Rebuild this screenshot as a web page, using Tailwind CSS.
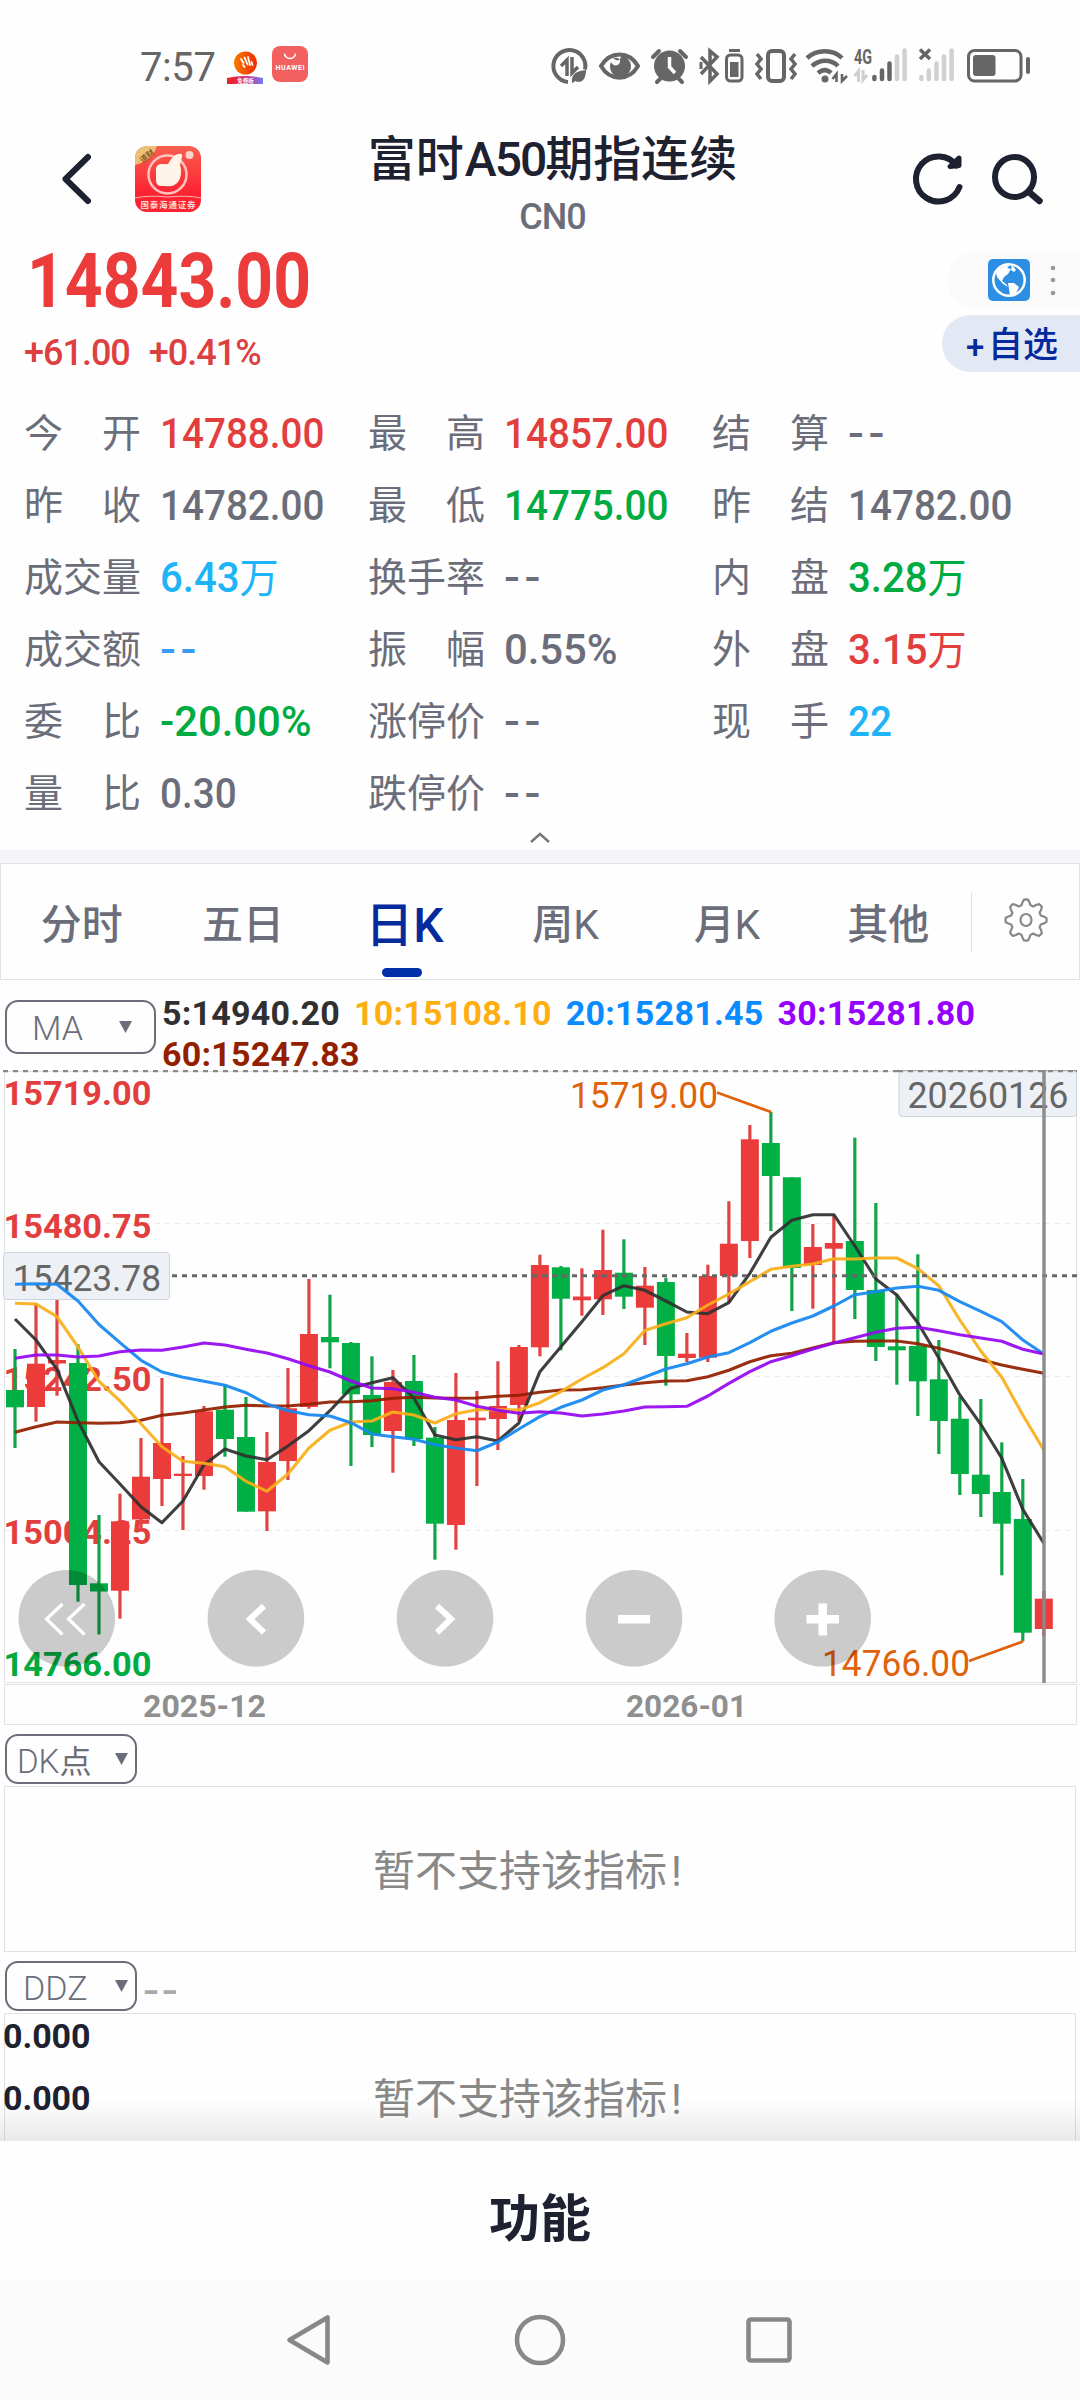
<!DOCTYPE html>
<html lang="zh-CN">
<head>
<meta charset="utf-8">
<title>富时A50期指连续</title>
<script src="https://cdn.jsdelivr.net/npm/@tailwindcss/browser@4"></script>
</head>
<body class="w-[1080px] h-[2400px] overflow-hidden bg-[#fefefe] flex flex-col font-['Roboto','Noto_Sans_CJK_SC',sans-serif] text-[#6b6e7a]">

<!-- status bar -->
<header class="h-[132px] shrink-0 flex items-center justify-between pl-[140px] pr-[49px]">
  <div class="flex items-center">
    <span class="w-[87px] pt-[3px] text-[40px] leading-none text-[#666] tracking-[-.4px]">7:57</span>
    <svg width="36" height="36" viewBox="0 0 36 36"><defs><linearGradient id="o" x1="0" x2="1"><stop offset="0" stop-color="#f77a00"/><stop offset="1" stop-color="#f02a00"/></linearGradient><linearGradient id="p" x1="0" x2="1"><stop offset="0" stop-color="#f0201c"/><stop offset=".5" stop-color="#d4307c"/><stop offset="1" stop-color="#6d7cf5"/></linearGradient></defs><circle cx="18.500" cy="15" r="11.500" fill="url(#o)"/><path d="M14 11l2.500 4M17.500 9.500l3 7M16 17l1.500 2M21 9l2 8M24.500 14l1 3" stroke="#fff" stroke-width="1.800" stroke-linecap="round"/><path d="M0 30Q18 26 36 30v6H0z" fill="url(#p)"/><text x="18.500" y="34.500" font-size="5.500" font-weight="700" text-anchor="middle" fill="#fff">免费听</text></svg>
    <svg class="ml-[9px] -mt-1" width="36" height="36" viewBox="0 0 36 36"><rect width="36" height="36" rx="8" fill="#f2605f"/><path d="M12.500 7.500a5.500 5 0 0 0 11 0" fill="none" stroke="#fff" stroke-width="1.500"/><text x="18" y="24" font-size="7" font-weight="700" text-anchor="middle" fill="#fff" textLength="29">HUAWEI</text></svg>
  </div>
  <svg class="overflow-visible" width="480" height="36" viewBox="551 48 480 36" fill="none" stroke="#666" stroke-width="4">
    <path d="M585 69.500A16 16 0 1 0 568 82"/><path d="M567 76V60l-6 6M572 57v16l6-6" stroke-width="3.500"/><path d="M572 83c-1-9 4-12 14-13 0 9-4 14-11 11l7-7-8 8z" fill="#666" stroke="none"/>
    <path d="M601 66c9-15.500 28-15.500 37 0-9 15.500-28 15.500-37 0z" stroke-width="4"/><path d="M613 58c5 5 8 1 8-2a10.500 10.500 0 1 1-10 6c2 5 8 4 9 0s-4-5-7-4z" fill="#666" stroke="none"/>
    <circle cx="669.500" cy="66" r="15.500" fill="#666" stroke="none"/><path d="M653 57l6-6M686 57l-6-6M657 82l4-4M682 82l-4-4" stroke-linecap="round"/><path d="M669.500 57v10l5.500 6" stroke="#fff" stroke-width="3.500"/>
    <path d="M701 57l16 17-7 7V51l7 6-16 17" stroke-width="3.500"/><path d="M701 62v7" stroke-width="3"/>
    <rect x="726.500" y="55" width="15.500" height="26" rx="4" stroke-width="3"/><rect x="730" y="62" width="8.500" height="15" fill="#666" stroke="none"/><path d="M729 50.500h11" stroke-width="3"/>
    <rect x="768" y="51" width="16" height="30" rx="4"/><path d="M757 54l4 5-4 5 4 5-4 5 4 5M795 54l-4 5 4 5-4 5 4 5-4 5" stroke-width="3.500"/>
    <path d="M807 58c10-9 26-9 35 0M812 66c8-7 19-7 26 0M818 73c5-4 9-4 13 0" stroke-width="4.500"/><circle cx="825" cy="79" r="3.500" fill="#666" stroke="none"/><path d="M836.500 82V74l-4 5M842 74v7l5-5" stroke-width="2.600"/>
    <text x="854" y="63.500" font-size="20" font-weight="700" fill="#666" stroke="none" textLength="18" lengthAdjust="spacingAndGlyphs">4G</text>
    <path d="M858.500 82V71l-4 5M863 70v10l4-5" stroke="#d0d0d0" stroke-width="3"/>
    <g stroke-linecap="round" stroke-width="4.500"><path d="M874.400 77v2M882 70.500V79M889.500 63.500V79"/><path d="M897 56.500V79M904.600 50.500V79M921.400 77v2M928.800 70.500V79M936.500 63.500V79M944 56.500V79M951.600 50.500V79" stroke="#d0d0d0"/></g>
    <path d="M920 49.500l10 9.500M930 49.500l-10 9.500" stroke-width="3.500"/>
    <rect x="968.500" y="50.500" width="52.500" height="30.500" rx="6" stroke-width="3"/><rect x="973" y="55" width="22.500" height="21" rx="3" fill="#666" stroke="none"/><path d="M1028 59v13" stroke-linecap="round"/>
  </svg>
</header>

<!-- title bar -->
<div class="h-[104px] shrink-0 grid grid-cols-[330px_1fr_330px]">
  <div class="flex pl-[60px] pt-[14px]">
    <svg width="34" height="66" viewBox="0 0 34 66"><path d="M28 11L5.500 33 28 55" fill="none" stroke="#1e2130" stroke-width="6" stroke-linecap="round" stroke-linejoin="round"/></svg>
    <svg class="ml-[41px]" width="66" height="66" viewBox="0 0 66 66"><defs><clipPath id="r"><rect width="66" height="66" rx="12"/></clipPath><linearGradient id="g" x2="0" y2="1"><stop stop-color="#f8604e"/><stop offset=".7" stop-color="#fc2433"/></linearGradient></defs><g clip-path="url(#r)"><rect width="66" height="66" fill="url(#g)"/><path d="M0 0h22Q17 15 0 19z" fill="#edc07a"/><text x="5" y="16" font-size="8" font-weight="700" fill="#8a5a20" transform="rotate(-38 8 13)">道财</text><circle cx="32.500" cy="28.500" r="19" fill="none" stroke="#ffc2bd" stroke-width="2.500"/><path d="M21 22q1-4 6-4h6q5-9 10-10 5-1 4 3l-2 8q1 2 1 7 0 8-5 12-4 3-10 2H25q-4-1-4-5z" fill="#fdf3e6"/><circle cx="54.500" cy="9" r="4" fill="#fdd4cb"/><path d="M0 52q14-3 33-1 20-2 33 1" fill="none" stroke="#ffb3ae"/><text x="33" y="61.500" font-size="8.500" font-weight="700" text-anchor="middle" fill="#ffd9d6" textLength="55">国泰海通证券</text></g></svg>
  </div>
  <div class="flex flex-col items-center justify-center pl-[25px]">
    <div class="h-[54px] flex items-center text-[#1e2130] font-medium text-[48px] leading-none -mt-1 whitespace-nowrap"><span>富时</span><span class="tracking-[-2px] ml-[1px]">A50</span><span>期指连续</span></div>
    <div class="h-[54px] mb-[-10px] flex items-center text-[36px] font-medium leading-none tracking-[-1px] pt-[5px]">CN0</div>
  </div>
  <div class="flex items-start pl-[160px] pt-[18px]">
    <svg width="140" height="60" viewBox="910 150 140 60" fill="none" stroke="#1e2130" stroke-width="6" stroke-linecap="round" stroke-linejoin="round"><path d="M959.500 187a22.500 22.500 0 1 1-3-21.500"/><path d="M950 166.500l9-1V158z" stroke-width="5" fill="#1e2130"/><ellipse cx="1014.500" cy="177" rx="19.500" ry="20"/><path d="M1029 192l10.500 9" stroke-width="6.500"/></svg>
  </div>
</div>

<!-- price -->
<section class="h-[161px] shrink-0 flex justify-between">
  <div class="pl-6 pt-[6px]">
    <div class="pl-[3px]"><span class="block origin-left scale-x-[0.868] text-[76px] leading-[78px] font-bold text-[#ec3b3b]">14843.00</span></div>
    <div class="flex h-[66px] items-center gap-[19px] text-[36px] leading-none text-[#dd4040] font-medium tracking-[-1px]"><span>+61.00</span><span>+0.41%</span></div>
  </div>
  <div class="pt-4 flex flex-col items-end gap-[7px]">
    <div class="w-[133px] h-[56px] rounded-l-full bg-[#fafafa] flex items-center pl-[41px] gap-[20px]">
      <svg width="42" height="42" viewBox="0 0 42 42"><rect width="42" height="42" rx="5" fill="#2d8fe3"/><circle cx="21" cy="21" r="15.700" fill="none" stroke="#fff" stroke-width="2.500"/><path d="M8 14q5-8 14-8l-3 3 4 1-3 5-4 3-2 4 4 3 2 3-5-3-6-7zM20 24l6 0 5 4-3 6-6 3-1-7zM24 6l4 5-2 2-3-2z" fill="#fff"/></svg>
      <svg width="6" height="34" viewBox="0 0 6 34" fill="#999"><circle cx="3" cy="5" r="2.300"/><circle cx="3" cy="17" r="2.300"/><circle cx="3" cy="30" r="2.300"/></svg>
    </div>
    <div class="w-[138px] h-[57px] rounded-l-full bg-[#e3e8f5] flex items-center pl-[24px] pt-[3px] text-[#052a9e] leading-none font-medium"><span class="text-[33px] w-[22px] mt-1">+</span><span class="text-[35px]">自选</span></div>
  </div>
</section>

<!-- quote table -->
<section id="quote" class="h-[432px] shrink-0 grid grid-cols-[344px_344px_344px] grid-rows-6 pl-6"></section>
<div class="h-[21px] shrink-0 flex justify-center"><svg width="22" height="16" viewBox="0 0 22 16"><path d="M2 13l9-8 9 8" fill="none" stroke="#777" stroke-width="2.500"/></svg></div>
<div class="h-[13px] shrink-0 bg-[#f4f5f9]"></div>

<!-- period tabs -->
<nav class="h-[117px] shrink-0 border border-[#e2e2e2] flex items-center text-[41px] leading-none font-[450]">
  <div class="w-[970px] h-full grid grid-cols-6 items-center text-center pt-[8px] pr-[2px]">
    <div>分时</div><div>五日</div>
    <div class="relative h-full flex items-center justify-center text-[48px] font-medium text-[#052a9e]">日K<i class="absolute bottom-[2px] left-[58px] w-[40px] h-[9px] rounded-full bg-[#002fa7]"></i></div>
    <div>周K</div><div>月K</div><div>其他</div>
  </div>
  <div class="w-px h-[60px] bg-[#e0e0e0]"></div>
  <svg class="ml-[32px] -mt-[3px]" width="44" height="44" viewBox="-22 -22 44 44" fill="none" stroke="#888" stroke-width="2.200" stroke-linejoin="round"><path id="gear"/><ellipse rx="5.500" ry="6"/></svg>
</nav>

<!-- MA legend -->
<div class="h-[90px] shrink-0 flex pl-[5px]">
  <div class="mt-[20px] w-[151px] h-[54px] rounded-[13px] border-2 border-[#6b6e7a] flex items-center justify-between pl-[25px] pr-[22px]"><span class="text-[34px] leading-none font-[350] pt-[2px]">MA</span><svg width="13" height="12"><path d="M0 0h13L6.500 12z" fill="#6b6e7a"/></svg></div>
  <div class="ml-[6px] mt-[13px] w-[850px] flex flex-wrap content-start gap-x-[14px] text-[34px] leading-[41px] font-bold tracking-[.25px]">
    <span class="text-[#303030]">5:14940.20</span><span class="text-[#ffae0f]">10:15108.10</span><span class="text-[#0a8bff]">20:15281.45</span><span class="text-[#9600ff]">30:15281.80</span><span class="text-[#931f00]">60:15247.83</span>
  </div>
</div>

<!-- candlestick chart -->
<svg id="chart" class="shrink-0 block" width="1080" height="657" viewBox="0 1070 1080 657"></svg>

<!-- indicators -->
<div class="h-[59px] shrink-0 flex pl-[5px] pt-[7px]">
  <div class="w-[132px] h-[50px] rounded-[13px] border-2 border-[#6b6e7a] flex items-center justify-between pl-[10px] pr-[7px]"><span class="text-[33px] leading-none font-[350] pt-[4px]">DK<span class="text-[32px] font-normal">点</span></span><svg width="13" height="12"><path d="M0 0h13L6.500 12z" fill="#6b6e7a"/></svg></div>
</div>
<div class="h-[166px] shrink-0 mx-1 border border-[#e2e2e2] flex text-[42px] leading-none text-[#888] pl-[368px] pt-[64px]"><span>暂不支持该指标</span><span class="pl-[4px]">!</span></div>
<div class="h-[61px] shrink-0 flex pl-[5px] pt-[9px]">
  <div class="w-[132px] h-[50px] rounded-[13px] border-2 border-[#6b6e7a] flex items-center justify-between pl-[16px] pr-[7px]"><span class="text-[34px] leading-none font-[350] pt-[4px]">DDZ</span><svg width="13" height="12"><path d="M0 0h13L6.500 12z" fill="#6b6e7a"/></svg></div>
  <span class="ml-[6px] mt-[11px] origin-left scale-x-[1.25] text-[38px] leading-none font-medium text-[#aaa] tracking-[2px]">--</span>
</div>
<div class="relative h-[128px] shrink-0">
  <div class="h-full mx-1 border border-b-0 border-[#e2e2e2] flex">
    <div class="w-[368px] flex flex-col pt-[1px] text-[34px] leading-[62px] font-bold text-[#1e2130] tracking-[-.1px]"><span class="-mt-[10px] -ml-[2px]">0.000</span><span class="-ml-[2px]">0.000</span></div>
    <div class="pt-[65px] text-[42px] leading-none text-[#888] flex"><span>暂不支持该指标</span><span class="pl-[4px]">!</span></div>
  </div>
  <div class="absolute inset-x-0 bottom-0 h-[42px] bg-linear-to-b from-black/0 to-black/8"></div>
</div>

<div class="h-[139px] shrink-0 flex items-center justify-center bg-[#fefefe] text-[51px] leading-none font-bold text-[#1e2130] pt-[17px]">功能</div>

<!-- system navigation -->
<footer class="h-[120px] shrink-0 bg-[#fbfbfb] flex justify-center items-center">
  <svg width="520" height="60" viewBox="280 2310 520 60" fill="none" stroke="#888" stroke-width="4.600" stroke-linejoin="round"><path d="M327.500 2317.500v45L289.500 2340z"/><circle cx="540" cy="2340" r="23"/><rect x="748.500" y="2319.500" width="41" height="41" rx="2.500"/></svg>
</footer>

<script>
// label, value, colour; three cells per row
const R='text-[#e33e3e]',G='text-[#00ab42]',B='text-[#1fb4f7]',N='text-[#6b6e7a]';
const rows=[
 ['今开','14788.00',R],['最高','14857.00',R],['结算','--',N],
 ['昨收','14782.00',N],['最低','14775.00',G],['昨结','14782.00',N],
 ['成交量','6.43万',B],['换手率','--',N],['内盘','3.28万',G],
 ['成交额','--','text-[#3a9bf5]'],['振幅','0.55%',N],['外盘','3.15万',R],
 ['委比','-20.00%',G],['涨停价','--',N],['现手','22',B],
 ['量比','0.30',N],['跌停价','--',N]];
// horizontal fit of a value, by its kind
const fit=v=>v==='--'?'scale-x-[1.12] tracking-[4px]':v.includes('%')?'scale-x-[0.995]':v.includes('万')?'scale-x-[0.955]':'scale-x-[0.92]';
document.getElementById('quote').innerHTML=rows.map(([l,v,c])=>
 `<div class="flex items-center leading-none"><span class="w-[117px] flex justify-between text-[39px] pt-[2px]">${[...l].map(x=>`<span>${x}</span>`).join('')}</span><span class="ml-[19px] flex items-center origin-left text-[42px] font-[480] pt-[2px] ${c} ${fit(v)}">${v.replace('万','')}${v.includes('万')?'<span class="text-[41px] font-normal pt-[2px]">万</span>':''}</span></div>`).join('');

// gear outline: eight rounded teeth
let g='';for(let i=0;i<64;i++){const a=i/64*2*Math.PI-Math.PI/2,r=18+2.600*Math.tanh(3*Math.cos(8*a));g+=(i?'L':'M')+(r*Math.cos(a)).toFixed(1)+' '+(r*Math.sin(a)).toFixed(1)}
document.getElementById('gear').setAttribute('d',g+'z');

// candles: colour, high, open/close top, open/close bottom, low
const K=[['g',1349,1390,1407.3,1448],['r',1303,1363.7,1407,1421.7],['r',1299,1360,1363.5,1395.7],['g',1344.3,1363,1585,1601.7],['g',1515,1583.3,1591.5,1634.5],['r',1493.7,1521.3,1590.7,1618.7],['r',1438,1476.7,1519.5,1529],['r',1378,1443,1479,1506],['r',1456,1473.7,1476,1530],['r',1406,1411.3,1476,1489.7],['g',1385.7,1409.7,1439,1456.7],['g',1397,1437,1511.7,1511.7],['r',1432,1462,1511.3,1531],['r',1368,1408.3,1461,1480],['r',1279,1334,1407,1408.7],['g',1294.7,1337,1342.3,1368.3],['g',1342,1343,1394.3,1466],['g',1356.3,1395,1435,1447],['r',1370,1382,1431,1472.7],['g',1355,1381,1439,1446],['g',1427,1437.7,1523.7,1559.7],['r',1373,1420,1525,1549.7],['r',1391,1417.7,1420.3,1486],['r',1361.3,1406,1419,1450],['r',1345,1347,1405,1421],['r',1254.7,1265,1347.3,1356.3],['g',1266,1267.3,1298.7,1350.3],['r',1268.3,1296.5,1300.3,1315.7],['r',1229.7,1270,1299.3,1315],['g',1239.3,1272.7,1296.7,1309],['r',1267,1285.7,1307.7,1345],['g',1277.7,1282,1356,1385.7],['r',1333,1353.7,1358,1362],['r',1264.7,1276,1357.7,1362],['r',1201.3,1243.7,1276,1302.7],['r',1125,1139.3,1241,1258],['g',1112,1143,1176,1231],['g',1177.3,1177.3,1268,1311],['r',1224,1247,1265,1308.7],['r',1215,1243,1248.7,1342.7],['g',1137.7,1241,1290,1319],['g',1203,1290,1347,1361],['g',1294,1346.3,1350.3,1384.7],['g',1254.3,1346,1381.3,1416],['g',1340,1379.3,1421,1454],['g',1397,1418.7,1474,1495],['g',1399,1474.7,1494,1517],['g',1442.3,1492,1523.7,1575.3],['g',1479,1519,1632.7,1641.3],['r',1591,1598.7,1629,1636]];
// moving averages: 60, 5, 10, 20, 30
const L=[
['#931f00',[1432.3,1426.7,1422,1422.7,1423.3,1422.7,1420.3,1415.3,1413,1410,1407,1405.3,1406,1406,1404.3,1402,1401.7,1400.7,1398.3,1397.3,1398,1398.3,1398,1396.3,1395.3,1392.3,1390,1389.7,1387.7,1385,1382.7,1381,1380.7,1376.7,1370.3,1361.7,1355.7,1353.3,1348,1342.7,1341.3,1341,1341,1343.7,1348.3,1353.7,1359.7,1365,1369.3,1373.3]],
['#303030',[1319,1340,1369.3,1421,1461.7,1484,1506.7,1522.7,1501,1464.7,1449,1456,1459.7,1446,1430.7,1410.7,1388.3,1382.7,1377.7,1398,1435,1439.7,1436.7,1441,1423,1371.7,1346.7,1321.7,1295.7,1285.7,1290.3,1301,1312,1313.7,1302.7,1273.3,1237.3,1220.3,1214.7,1214.7,1246,1279,1295,1322.7,1358,1395,1424.3,1458.3,1509.3,1543.3]],
['#faae1a',[1303.3,1304,1316.7,1347,1381.3,1401,1423.7,1446.7,1461.3,1463.3,1466.7,1481.3,1491.3,1474,1448,1430.3,1422,1421,1412,1415,1423,1413.7,1409.7,1409.7,1410,1402.7,1391.7,1379,1367.7,1353.7,1330.5,1323.7,1317.7,1305,1294,1281.7,1269.3,1266.3,1264,1258.7,1259,1258,1258,1268.7,1285.7,1320,1351,1377.3,1415,1450]],
['#1488f0',[1284.3,1283.7,1284.3,1301,1324.5,1342.7,1360.3,1372,1377.3,1381.3,1385.3,1392.7,1404,1410.7,1414.7,1416,1422.7,1434,1436.7,1439.3,1444.7,1448,1450.7,1442,1429,1416.7,1407.3,1400,1390,1384.7,1377,1369,1363.7,1357,1352.7,1342.7,1331.3,1323,1316,1306,1294.7,1291.7,1288,1286.3,1290.3,1301.7,1311.3,1321.7,1340,1354]],
['#9508f0',[1358.3,1355,1355,1357,1356,1351.7,1350,1350.3,1347,1343,1345,1349.3,1353,1358.7,1365.7,1372,1381,1388,1388.7,1392.3,1397.3,1400,1406.3,1410.3,1413.3,1411.7,1413,1416,1414,1411,1407,1406.7,1406.3,1396,1383.3,1371.7,1361.7,1355.7,1349,1343,1337.7,1332.3,1328.3,1327.3,1330.7,1334.7,1338,1341.3,1349.3,1354]]];
const X=i=>15+i*20.996;
const T=(x,y,t,w,fs,c,b)=>`<text x="${x}" y="${y}" font-size="${fs}" font-weight="${b}" fill="${c}" textLength="${w}" lengthAdjust="spacingAndGlyphs">${t}</text>`;
let s='<g fill="none" stroke="#e2e2e2"><path d="M4.500 1682V1071.500H1076.500V1682.500H4.500M4.500 1684.500H1076.500V1724.500H4.500z"/><path d="M5 1223.500H1070M5 1376.500H1070M5 1530.500H1070" stroke="#ebebeb" stroke-dasharray="5 5"/></g><path d="M3 1070.800H1077" stroke="#888" stroke-width="3" stroke-dasharray="5 5"/>';
[[1105,'15719.00'],[1238,'15480.75'],[1391,'15242.50'],[1544,'15004.25'],[1676,'14766.00']].forEach(([y,t],i)=>s+=T(3.5,y,t,148,34,i==4?'#00ab42':'#e33e3e',700));
K.forEach(([c,h,a,b,l],i)=>{const f=c=='r'?'#ec3b3b':'#00b044',x=X(i);s+=`<rect x="${x-1.6}" y="${h}" width="3.200" height="${l-h}" fill="${c=='r'?'#e04444':'#12a548'}"/><rect x="${x-9}" y="${a}" width="18" height="${b-a}" fill="${f}"/>`});
s+='<rect x="3.500" y="1252.500" width="166" height="47" rx="3" fill="#edf0f5" stroke="#ccd3de"/>'+T(13,1291,'15423.78',148,37.5,'#666',400);
s+='<rect x="899" y="1071" width="177.500" height="45.500" rx="3" fill="#edf0f5" stroke="#ccd3de"/>'+T(907.5,1108,'20260126',161,37.5,'#666',400);
s+='<path d="M898 1070.800H1077" stroke="#888" stroke-width="3" stroke-dasharray="5 5"/>';
L.forEach(([c,v])=>s+=`<polyline fill="none" stroke="${c}" stroke-opacity=".93" stroke-width="3.100" stroke-linejoin="round" points="${v.map((y,i)=>X(i)+','+y).join(' ')}"/>`);
s+='<path d="M172 1275.800H1077" stroke="#666" stroke-width="3" stroke-dasharray="5 5"/><path d="M1044 1070V1683" stroke="#888" stroke-width="3.500" stroke-opacity=".95"/>';
s+='<path d="M717 1092.500L771 1112M969 1661L1023 1641.500" stroke="#e0620d" stroke-width="2.800"/>'+T(570,1108,'15719.00',148,37.5,'#e0620d',400)+T(822,1676,'14766.00',148,37.5,'#e0620d',400);
[66.8,255.9,445,634,822.7].forEach(x=>s+=`<circle cx="${x}" cy="1618.300" r="48.300" fill="#000" fill-opacity=".2"/>`);
s+='<g fill="none" stroke="#fff"><path d="M62.500 1604L46.500 1619l16 15.500M84.500 1604L68.500 1619l16 15.500" stroke-width="3.200"/><path d="M264 1606L250 1619l14 13.500M437 1606l14 13-14 13.500" stroke-width="6"/><path d="M618 1619.300h32M806.500 1619.300h32.500M822.700 1603.500v32" stroke-width="8.500"/></g>';
s+=T(143,1717,'2025-12',123,30.5,'#8f8f8f',700)+T(626,1717,'2026-01',121,30.5,'#8f8f8f',700);
document.getElementById('chart').innerHTML=s;
</script>
</body>
</html>
